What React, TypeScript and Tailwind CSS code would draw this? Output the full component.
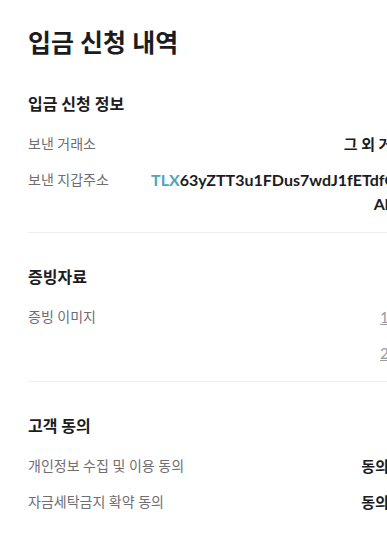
import { FC, ReactNode } from "react";

const font = "font-['Lato','Noto_Sans_CJK_KR',sans-serif]";

const Row: FC<{ label: string; children: ReactNode }> = ({ label, children }) => (
  <div className="flex items-start">
    <div className="min-w-[120px] shrink-0 whitespace-nowrap text-[14px] leading-6 text-[#6e6e73]">{label}</div>
    <div className="flex-1 min-w-0 text-right text-[15px] leading-6">{children}</div>
  </div>
);

const Section: FC<{ title: string; last?: boolean; children: ReactNode }> = ({ title, last, children }) => (
  <section className={`pt-8 ${last ? "pb-6" : "pb-4 border-b border-[#efeff1]"}`}>
    <h2 className="text-[16px] leading-6 font-bold text-[#1c1c1e]">{title}</h2>
    <div className="mt-4 flex flex-col gap-3">{children}</div>
  </section>
);

export default function App() {
  return (
    <div className={`w-full h-[535px] overflow-hidden bg-white ${font}`}>
      <div className="w-[448px] px-7 pt-6">
        <h1 className="text-[25px] leading-9 font-bold text-[#1c1c1e]">입금 신청 내역</h1>

        <Section title="입금 신청 정보">
          <Row label="보낸 거래소">
            <span className="font-bold text-[#1c1c1e] whitespace-nowrap">그 외 거래소</span>
          </Row>
          <Row label="보낸 지갑주소">
            <span className="text-[16px] font-bold text-[#1c1c1e] break-all">
              <span className="text-[#4aa6b8]">TLX</span>63yZTT3u1FDus7wdJ1fETdfQm2Ak8Lp
            </span>
          </Row>
        </Section>

        <Section title="증빙자료">
          <Row label="증빙 이미지">
            <span className="text-[#9a9aa0] underline whitespace-nowrap">1.jpeg</span>
          </Row>
          <Row label="">
            <span className="text-[#9a9aa0] underline whitespace-nowrap">2.jpeg</span>
          </Row>
        </Section>

        <Section title="고객 동의" last>
          <Row label="개인정보 수집 및 이용 동의">
            <span className="font-bold text-[#1c1c1e] whitespace-nowrap">동의 완료</span>
          </Row>
          <Row label="자금세탁금지 확약 동의">
            <span className="font-bold text-[#1c1c1e] whitespace-nowrap">동의 완료</span>
          </Row>
        </Section>
      </div>
    </div>
  );
}
